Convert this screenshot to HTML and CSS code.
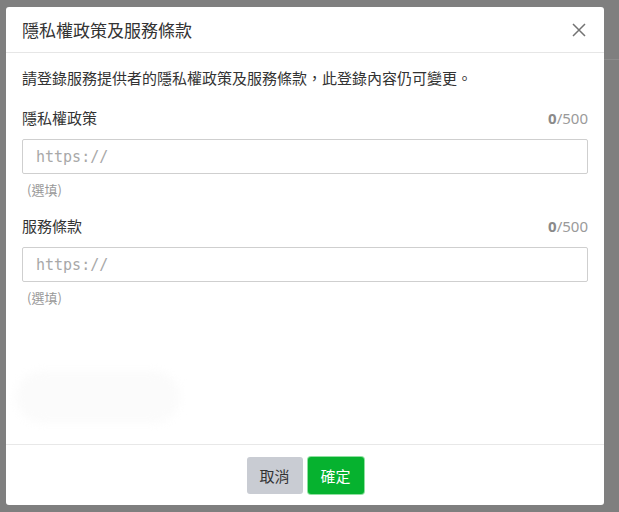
FILE: index.html
```html
<!DOCTYPE html>
<html lang="zh-Hant">
<head>
<meta charset="utf-8">
<link rel="stylesheet" href="styles.css">
</head>
<body>
<div class="backdrop-line"></div>
<div class="modal">
  <div class="modal-header">
    <h2 class="modal-title">隱私權政策及服務條款</h2>
    <button class="close-btn" aria-label="close">
      <svg width="14" height="14" viewBox="0 0 14 14"><path d="M1 1L13 13M13 1L1 13" stroke="#737373" stroke-width="1.5" fill="none"/></svg>
    </button>
  </div>
  <div class="modal-body">
    <p class="desc">請登錄服務提供者的隱私權政策及服務條款，此登錄內容仍可變更。</p>
    <div class="field">
      <div class="field-head">
        <span class="label">隱私權政策</span>
        <span class="counter"><b>0</b>/500</span>
      </div>
      <input class="text-input" type="text" placeholder="https://">
      <div class="hint">(選填)</div>
    </div>
    <div class="field">
      <div class="field-head">
        <span class="label">服務條款</span>
        <span class="counter"><b>0</b>/500</span>
      </div>
      <input class="text-input" type="text" placeholder="https://">
      <div class="hint">(選填)</div>
    </div>
    <div class="ghost"></div>
  </div>
  <div class="modal-footer">
    <button class="btn btn-cancel">取消</button>
    <button class="btn btn-ok">確定</button>
  </div>
</div>
</body>
</html>
```
FILE: styles.css
```css
* { box-sizing: border-box; }
html, body { margin: 0; padding: 0; }
body {
  background: #7f7f7f;
  width: 619px;
  height: 512px;
  overflow: hidden;
  font-family: "Noto Sans CJK TC", "Noto Sans", sans-serif;
  color: #333;
  position: relative;
}
.backdrop-line {
  position: absolute;
  left: 604px;
  top: 59px;
  width: 15px;
  height: 1px;
  background: #8c8c8c;
}
.modal {
  margin: 7px 0 0 6px;
  width: 598px;
  height: 498px;
  background: #fff;
  border-radius: 3px;
  display: flex;
  flex-direction: column;
  position: relative;
}
.modal-header {
  height: 46px;
  border-bottom: 1px solid #e6e6e6;
  display: flex;
  align-items: center;
  justify-content: space-between;
  padding: 0 16px 0 16px;
}
.modal-title {
  margin: 0;
  font-size: 17px;
  font-weight: 400;
  line-height: 24px;
  color: #333;
  padding-top: 1px;
}
.close-btn {
  border: 0;
  background: none;
  padding: 0;
  width: 16px;
  height: 16px;
  display: flex;
  align-items: center;
  justify-content: center;
  margin-right: 1px;
  margin-top: 1px;
}
.modal-body {
  flex: 1;
  padding: 14px 16px 0 16px;
  position: relative;
}
.desc {
  margin: 0;
  font-size: 15px;
  line-height: 22px;
  color: #333;
}
.field { margin-top: 18px; }
.field + .field { margin-top: 16px; }
.field-head {
  display: flex;
  justify-content: space-between;
  align-items: center;
  height: 22px;
}
.label { font-size: 15px; line-height: 22px; color: #333; }
.counter {
  font-size: 15px;
  color: #9a9a9a;
  font-family: "Noto Sans", "Liberation Sans", sans-serif;
}
.counter b { font-weight: 700; color: #8a8a8a; }
.text-input {
  display: block;
  margin-top: 10px;
  width: 566px;
  height: 35px;
  border: 1px solid #cfcfcf;
  border-radius: 2px;
  padding: 0 13px;
  font-family: "DejaVu Sans Mono", monospace;
  font-size: 15px;
  color: #333;
  outline: none;
}
.text-input::placeholder { color: #a8a8a8; }
.hint {
  margin-top: 7px;
  padding-left: 5px;
  font-size: 13px;
  line-height: 18px;
  color: #999;
}
.ghost {
  position: absolute;
  left: 10px;
  top: 318px;
  width: 164px;
  height: 52px;
  border-radius: 30px;
  background: #fbfbfb;
  filter: blur(4px);
}
.modal-footer {
  height: 61px;
  border-top: 1px solid #e8e8e8;
  display: flex;
  justify-content: center;
  align-items: center;
  gap: 4px;
}
.btn {
  border: 0;
  border-radius: 3px;
  font-family: "Noto Sans CJK TC", sans-serif;
  font-size: 15px;
  height: 37px;
  padding: 0 13px;
  cursor: pointer;
}
.btn-cancel {
  background: #c9ccd3;
  color: #333;
  width: 56px;
}
.btn-ok {
  background: #06b22f;
  color: #fff;
  width: 56px;
  box-shadow: 0 0 0 1px #8fe0a0;
  margin-left: 1px;
}
```
